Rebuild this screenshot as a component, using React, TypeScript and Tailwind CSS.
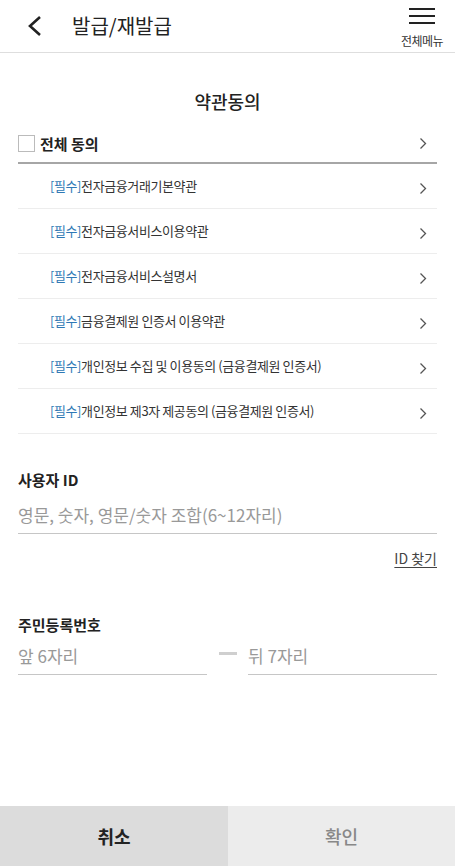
import React from 'react';

const terms = [
  '전자금융거래기본약관',
  '전자금융서비스이용약관',
  '전자금융서비스설명서',
  '금융결제원 인증서 이용약관',
  '개인정보 수집 및 이용동의 (금융결제원 인증서)',
  '개인정보 제3자 제공동의 (금융결제원 인증서)',
];

const Chevron: React.FC<{ className?: string }> = ({ className }) => (
  <svg width="8" height="13" viewBox="0 0 8 13" className={className}>
    <path d="M1.5 1.5 L6.5 6.5 L1.5 11.5" fill="none" stroke="#555" strokeWidth="1.3" />
  </svg>
);

const App: React.FC = () => {
  return (
    <div
      className="w-[455px] h-[866px] bg-white flex flex-col text-[#222]"
      style={{ fontFamily: '"Noto Sans CJK KR", "Noto Sans", sans-serif' }}
    >
      <header className="h-[53px] flex items-center border-b border-[#dedede] shrink-0">
        <button className="w-[72px] h-full flex items-center pl-[27px]">
          <svg width="16" height="22" viewBox="0 0 16 22">
            <path d="M13 2 L3 11 L13 20" fill="none" stroke="#222" strokeWidth="2.6" />
          </svg>
        </button>
        <h1 className="text-[20px] leading-none flex-1 pb-[1px]">발급/재발급</h1>
        <button className="w-[60px] h-full flex flex-col items-center pt-[8px] pr-[6px]">
          <div className="w-[26px] flex flex-col gap-[5px]">
            <span className="block h-[2px] bg-[#222]" />
            <span className="block h-[2px] bg-[#222]" />
            <span className="block h-[2px] bg-[#222]" />
          </div>
          <span className="text-[12px] leading-none mt-[11px] text-[#333] tracking-[-0.5px]">전체메뉴</span>
        </button>
      </header>

      <main className="flex-1 px-[18px]">
        <h2 className="text-center text-[18px] font-medium mt-[35px] leading-[26px]">약관동의</h2>

        <div className="mt-[16px] h-[27px] flex items-center border-b-2 border-[#a6a6a6] pb-[5px] box-content">
          <span className="w-[17px] h-[17px] border border-[#bbb] bg-white mr-[5px]" />
          <span className="text-[15px] font-bold flex-1 leading-none">전체 동의</span>
          <Chevron className="mr-[10px]" />
        </div>

        <ul>
          {terms.map((t) => (
            <li key={t} className="h-[45px] flex items-center border-b border-[#ededed] pl-[32px]">
              <span className="flex-1 text-[13px] tracking-[-0.4px] text-[#333]">
                <span className="text-[#2f79b5]">[필수]</span>
                {t}
              </span>
              <Chevron className="mr-[10px] mt-[4px]" />
            </li>
          ))}
        </ul>

        <section className="mt-[35px]">
          <label className="block text-[15px] font-bold leading-[22px]">사용자 ID</label>
          <div className="mt-[12px] border-b border-[#c6c6c6] pb-[6px]">
            <span className="text-[17px] text-[#999] leading-[24px]">영문, 숫자, 영문/숫자 조합(6~12자리)</span>
          </div>
          <div className="flex justify-end mt-[14px]">
            <span className="text-[14px] text-[#444] underline underline-offset-[3px] leading-[20px]">ID 찾기</span>
          </div>
        </section>

        <section className="mt-[46px]">
          <label className="block text-[15px] font-bold leading-[22px]">주민등록번호</label>
          <div className="mt-[8px] flex items-start">
            <div className="w-[189px] border-b border-[#c6c6c6] pb-[6px]">
              <span className="text-[17px] text-[#999] leading-[24px]">앞 6자리</span>
            </div>
            <div className="flex-1 flex justify-center pt-[8px]">
              <span className="block w-[18px] h-[3px] bg-[#cfcfcf]" />
            </div>
            <div className="w-[189px] border-b border-[#c6c6c6] pb-[6px]">
              <span className="text-[17px] text-[#999] leading-[24px]">뒤 7자리</span>
            </div>
          </div>
        </section>
      </main>

      <footer className="h-[60px] flex shrink-0">
        <button className="w-[228px] bg-[#dcdcdc] text-[18px] font-bold text-[#222]">취소</button>
        <button className="flex-1 bg-[#ececec] text-[18px] text-[#888] font-medium">확인</button>
      </footer>
    </div>
  );
};

export default App;
